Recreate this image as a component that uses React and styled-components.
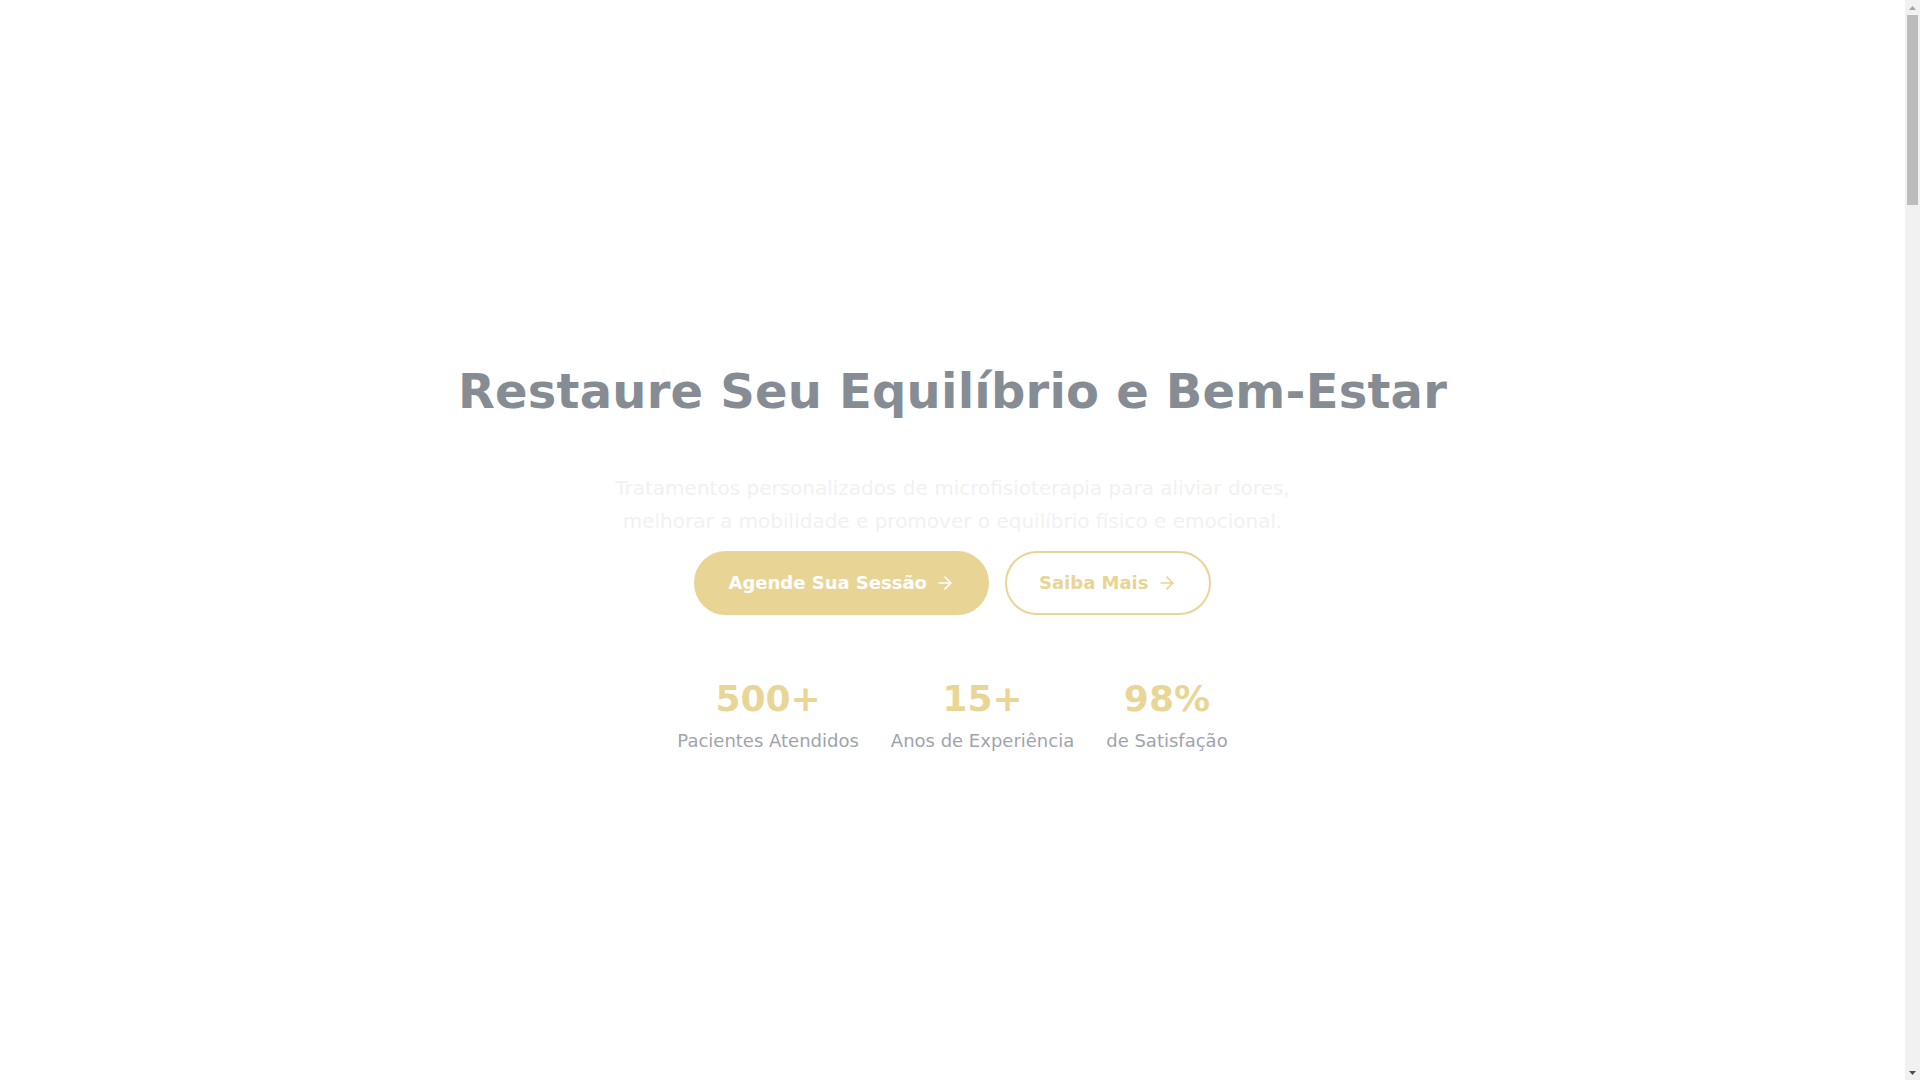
import React from "react";
import styled, { createGlobalStyle } from "styled-components";
import { ArrowRight } from "lucide-react";

const GlobalStyle = createGlobalStyle`
  * {
    box-sizing: border-box;
  }
  html, body {
    scrollbar-width: none;
  }
  body {
    margin: 0;
    background: #ffffff;
    font-family: "DejaVu Sans", "Noto Sans", sans-serif;
    color: #4b5563;
  }
  ::-webkit-scrollbar {
    display: none;
  }
`;

const Page = styled.main`
  display: flex;
  flex-direction: column;
  margin-right: 15px;
`;

/* classic scrollbar rail, as it shows in the screenshot */
const ScrollRail = styled.div`
  position: fixed;
  top: 0;
  right: 0;
  width: 15px;
  height: 100vh;
  background: #f1f1f1;
  display: flex;
  flex-direction: column;
  align-items: center;
  z-index: 10;
`;

const RailButton = styled.div`
  height: 15px;
  width: 15px;
  display: flex;
  align-items: center;
  justify-content: center;
`;

const RailTrack = styled.div`
  flex: 1;
  width: 15px;
  padding: 0 2px;
`;

const RailThumb = styled.div`
  height: 190px;
  background: #bcbcbc;
`;

const Hero = styled.section`
  min-height: 100vh;
  display: flex;
  flex-direction: column;
  align-items: center;
  padding: 367px 24px 80px;
  text-align: center;
`;

const Title = styled.h1`
  margin: 0;
  font-size: 48px;
  line-height: 48px;
  font-weight: 700;
  letter-spacing: 0.2px;
  color: #868c94;
`;

const Lead = styled.p`
  margin: 57px 0 0;
  max-width: 720px;
  font-size: 20px;
  line-height: 32.5px;
  color: #f1f1f2;
`;

const Actions = styled.div`
  display: flex;
  gap: 16px;
  margin-top: 14px;
`;

const Button = styled.a`
  display: inline-flex;
  align-items: center;
  gap: 8px;
  height: 64px;
  padding: 0 32px;
  border-radius: 9999px;
  border: 2px solid #e8d595;
  background: ${p => (p.$outline ? "transparent" : "#e8d595")};
  color: ${p => (p.$outline ? "#e8d595" : "#ffffff")};
  font-size: 18px;
  line-height: 28px;
  font-weight: 700;
  text-decoration: none;
  cursor: pointer;
`;

const Stats = styled.div`
  display: flex;
  gap: 32px;
  margin-top: 64px;
`;

const Stat = styled.div`
  display: flex;
  flex-direction: column;
  align-items: center;
`;

const StatValue = styled.div`
  font-size: 36px;
  line-height: 40px;
  font-weight: 700;
  color: #e9d697;
`;

const StatLabel = styled.div`
  margin-top: 8px;
  font-size: 18px;
  line-height: 28px;
  color: #a0a4ac;
`;

const Section = styled.section`
  min-height: 950px;
  padding: 120px 24px;
  display: flex;
  flex-direction: column;
  align-items: center;
  text-align: center;
  background: ${p => (p.$tint ? "#fbf8ef" : "#ffffff")};
`;

const SectionTitle = styled.h2`
  margin: 0 0 24px;
  font-size: 36px;
  color: #6b7280;
`;

const SectionText = styled.p`
  margin: 0;
  max-width: 672px;
  font-size: 18px;
  line-height: 1.7;
  color: #9ca3af;
`;

const Footer = styled.footer`
  padding: 48px 24px;
  text-align: center;
  font-size: 14px;
  color: #9ca3af;
  background: #f9fafb;
`;

const stats = [
  { value: "500+", label: "Pacientes Atendidos" },
  { value: "15+", label: "Anos de Experiência" },
  { value: "98%", label: "de Satisfação" },
];

const sections = [
  { id: "sobre", title: "Sobre a Microfisioterapia", text: "Uma abordagem manual e suave que ajuda o corpo a reconhecer e tratar a origem das dores." },
  { id: "beneficios", title: "Benefícios", text: "Alívio de dores, mais mobilidade e equilíbrio físico e emocional.", tint: true },
  { id: "como-funciona", title: "Como Funciona", text: "Sessões personalizadas, com avaliação cuidadosa e acompanhamento contínuo." },
  { id: "depoimentos", title: "Depoimentos", text: "Histórias de pacientes que recuperaram o bem-estar.", tint: true },
  { id: "contato", title: "Contato", text: "Agende sua sessão e dê o primeiro passo para o seu equilíbrio." },
];

const Triangle = ({ up, color }) => (
  <svg width="7" height="4" viewBox="0 0 7 4">
    <path d={up ? "M0 4 L3.5 0 L7 4 Z" : "M0 0 L3.5 4 L7 0 Z"} fill={color} />
  </svg>
);

export default function App() {
  return (
    <>
      <GlobalStyle />
      <ScrollRail>
        <RailButton>
          <Triangle up color="#a3a3a3" />
        </RailButton>
        <RailTrack>
          <RailThumb />
        </RailTrack>
        <RailButton>
          <Triangle color="#505050" />
        </RailButton>
      </ScrollRail>
      <Page>
        <Hero>
          <Title>Restaure Seu Equilíbrio e Bem-Estar</Title>
          <Lead>
            Tratamentos personalizados de microfisioterapia para aliviar dores,
            melhorar a mobilidade e promover o equilíbrio físico e emocional.
          </Lead>
          <Actions>
            <Button href="#contato">
              Agende Sua Sessão <ArrowRight size={20} strokeWidth={2} />
            </Button>
            <Button href="#sobre" $outline>
              Saiba Mais <ArrowRight size={20} strokeWidth={2} />
            </Button>
          </Actions>
          <Stats>
            {stats.map(s => (
              <Stat key={s.label}>
                <StatValue>{s.value}</StatValue>
                <StatLabel>{s.label}</StatLabel>
              </Stat>
            ))}
          </Stats>
        </Hero>
        {sections.map(s => (
          <Section key={s.id} id={s.id} $tint={s.tint}>
            <SectionTitle>{s.title}</SectionTitle>
            <SectionText>{s.text}</SectionText>
          </Section>
        ))}
        <Footer>© Microfisioterapia. Todos os direitos reservados.</Footer>
      </Page>
    </>
  );
}
